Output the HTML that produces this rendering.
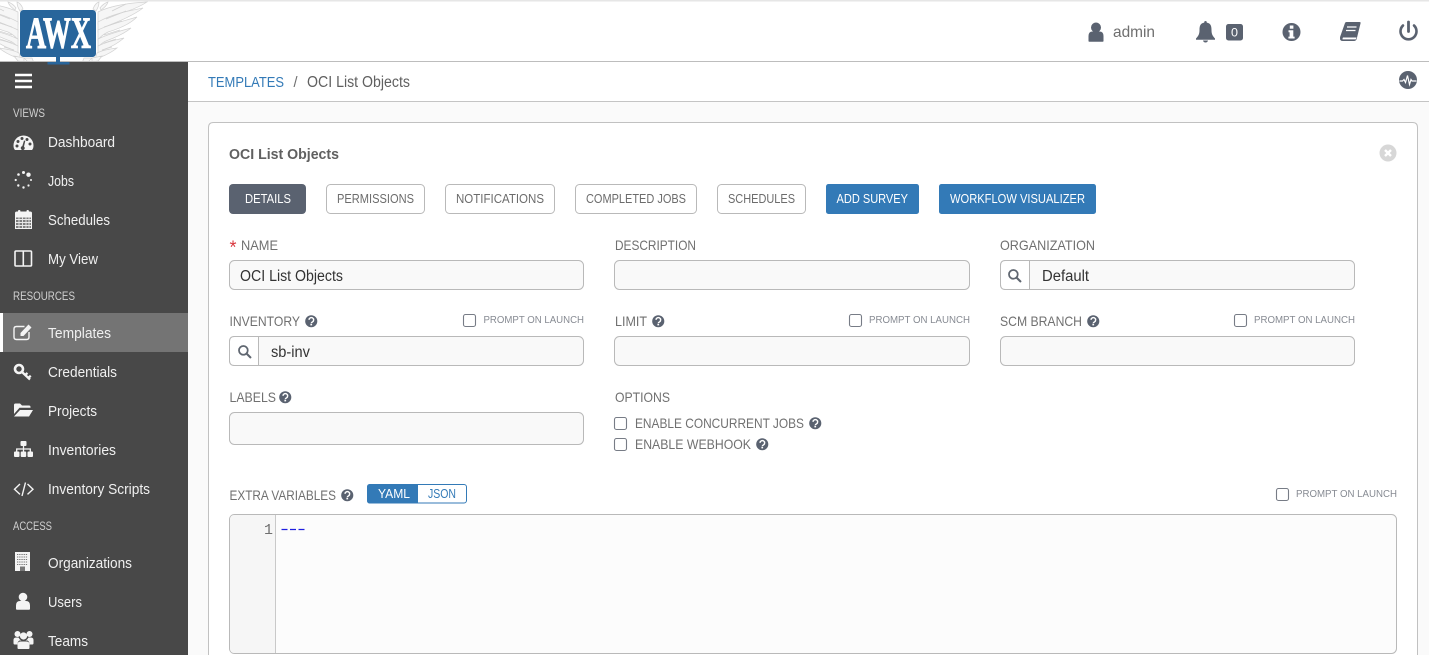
<!DOCTYPE html>
<html lang="en"><head><meta charset="utf-8"><title>OCI List Objects</title>
<style>
html,body{margin:0;padding:0;background:#fff;width:1429px;height:655px;overflow:hidden}
svg{display:block;font-family:"Liberation Sans",sans-serif}
.m{font-size:15px;fill:#f0f0f0}
.h{font-size:11.5px;fill:#d0d0d0}
.l{font-size:14px;fill:#707070}
.b{font-size:13px;fill:#6c6c6c}
.w{font-size:13px;fill:#fff}
.p{font-size:10.5px;fill:#878b93}
.v{font-size:15.5px;fill:#333}
.i{fill:#f9f9f9;stroke:#b9b9b9}
.o{fill:#fff;stroke:#b9b9b9}
.c{fill:#fff;stroke:#777c86;stroke-width:1.1}
</style></head><body>
<svg width="1429" height="655" viewBox="0 0 1429 655" xmlns="http://www.w3.org/2000/svg">
<defs>
<symbol id="q" viewBox="-6.5 -6.5 13 13" overflow="visible"><circle r="6.3" fill="#5a6270"/><path d="M-2.3-1.5a2.4 2.4 0 1 1 3.7 2.1c-.9.5-1.3.9-1.3 1.3" fill="none" stroke="#fff" stroke-width="1.5"/><rect x="-.9" y="2.6" width="1.8" height="1.7" fill="#fff"/></symbol>
<symbol id="s" viewBox="0 0 16 16"><circle cx="6.7" cy="6.7" r="5" fill="none" stroke="#5f6670" stroke-width="2"/><path d="M10.4 10.4l4.3 4.3" stroke="#5f6670" stroke-width="2.4" stroke-linecap="round"/></symbol>
<g id="feathers" fill="#f6f6f6" stroke="#d2d2d2" stroke-width=".7">
<path d="M98 12C110 6 128 3 147 2 138 8 126 12 116 15 110 17 103 20 98 24Z"/>
<path d="M98 22C112 14 128 11 143 8 134 15 122 20 112 24 107 26 102 29 98 32Z"/>
<path d="M98 30C110 24 124 21 137 17 130 24 118 29 108 32 104 34 100 37 98 40Z"/>
<path d="M98 39C108 34 120 31 131 28 124 34 114 38 106 41 103 42 100 45 98 47Z"/>
<path d="M98 46C106 42 115 40 124 38 118 43 111 47 105 49 102 51 100 52 98 54Z"/>
<path d="M97 53C103 50 110 49 117 48 112 52 106 55 101 57L95 60Z"/>
<path d="M92 58l10-2-4 5-6 1zM84 58l8 0-4 4-6 1z"/>
<path d="M93 9C94 6 96 3 99 2 99 5 98 8 96 11ZM100 8C102 5 105 3 108 2 107 5 104 8 101 10Z"/>
<path d="M112 11l14-7M106 19l20-8M104 27l18-6M104 35l16-5M104 43l12-4M102 50l10-3" fill="none"/>
</g>
</defs>

<rect width="1429" height="655" fill="#fff"/>
<rect width="1429" height="1.5" fill="#e6e6e6"/>
<rect x="188" y="62" width="1241" height="593" fill="#fafafa"/>
<rect x="188" y="62" width="1241" height="39" fill="#fff"/>
<use href="#feathers"/>
<use href="#feathers" transform="translate(116 0) scale(-1 1)"/>
<rect x="0" y="61" width="1429" height="1" fill="#bdbdbd"/>
<rect x="188" y="101" width="1241" height="1" fill="#c4c4c4"/>
<rect x="0" y="62" width="188" height="593" fill="#484848"/>

<!-- logo -->
<rect x="20" y="10" width="76" height="47" rx="3.5" fill="#28659b"/>
<rect x="56" y="56" width="4" height="6" fill="#28659b"/>
<rect x="47.500" y="62" width="22" height="2.500" fill="#28659b"/>
<text x="26" y="47.500" font-family="Liberation Serif,serif" font-weight="700" font-size="44" fill="#fff" stroke="#fff" stroke-width="1" textLength="65" lengthAdjust="spacingAndGlyphs">AWX</text>

<!-- sidebar -->
<rect x="0" y="313" width="188" height="39" fill="#747474"/>
<rect x="0" y="313" width="3" height="39" fill="#fff"/>
<path d="M15 75h17M15 81h17M15 87h17" stroke="#fff" stroke-width="2.500"/>
<text class="h" x="13" y="117" textLength="32" lengthAdjust="spacingAndGlyphs">VIEWS</text>
<text class="h" x="13" y="300" textLength="62" lengthAdjust="spacingAndGlyphs">RESOURCES</text>
<text class="h" x="13" y="530" textLength="39" lengthAdjust="spacingAndGlyphs">ACCESS</text>
<text class="m" x="48" y="147" textLength="67" lengthAdjust="spacingAndGlyphs">Dashboard</text>
<text class="m" x="48" y="186" textLength="26" lengthAdjust="spacingAndGlyphs">Jobs</text>
<text class="m" x="48" y="225" textLength="62" lengthAdjust="spacingAndGlyphs">Schedules</text>
<text class="m" x="48" y="264" textLength="50" lengthAdjust="spacingAndGlyphs">My View</text>
<text class="m" x="48" y="338" textLength="63" lengthAdjust="spacingAndGlyphs">Templates</text>
<text class="m" x="48" y="377" textLength="69" lengthAdjust="spacingAndGlyphs">Credentials</text>
<text class="m" x="48" y="416" textLength="49" lengthAdjust="spacingAndGlyphs">Projects</text>
<text class="m" x="48" y="455" textLength="68" lengthAdjust="spacingAndGlyphs">Inventories</text>
<text class="m" x="48" y="494" textLength="102" lengthAdjust="spacingAndGlyphs">Inventory Scripts</text>
<text class="m" x="48" y="568" textLength="84" lengthAdjust="spacingAndGlyphs">Organizations</text>
<text class="m" x="48" y="607" textLength="34" lengthAdjust="spacingAndGlyphs">Users</text>
<text class="m" x="48" y="646" textLength="40" lengthAdjust="spacingAndGlyphs">Teams</text>

<!-- dashboard -->
<path d="M13.500 145.500a10 10 0 0 1 20 0c0 2-.5 3.500-1.500 4.500H15c-1-1-1.500-2.500-1.500-4.500Z" fill="#f4f4f4"/>
<g fill="#484848"><circle cx="18" cy="141.500" r="1.500"/><circle cx="22" cy="138.500" r="1.500"/><circle cx="27" cy="139.500" r="1.500"/><circle cx="30" cy="144" r="1.500"/><circle cx="17" cy="146" r="1.500"/><path d="M24 140.500l1.300.4-1.300 5.600a2 2 0 1 1-1.700-.4Z"/></g>
<!-- jobs -->
<g fill="#f4f4f4"><circle cx="28.500" cy="174.700" r="2.200"/><circle cx="23.500" cy="172.500" r="1.500"/><circle cx="18.500" cy="174.500" r="1.300"/><circle cx="15.700" cy="180" r="1.100"/><circle cx="18.300" cy="185.500" r="1.200"/><circle cx="23.500" cy="187.500" r="1.200"/><circle cx="28.500" cy="185.500" r="1.100"/><circle cx="31" cy="180" r="1"/></g>
<!-- schedules -->
<path d="M15 213q0-1.500 2-1.500h13q2 0 2 1.500v16H15Z" fill="#f4f4f4"/><rect x="18" y="210" width="2.400" height="4" rx="1" fill="#f4f4f4"/><rect x="26.500" y="210" width="2.400" height="4" rx="1" fill="#f4f4f4"/>
<path d="M16 217.500h15v10.500H16Z" fill="#7d7d7d"/><path d="M16 219.500h15M16 222.500h15M16 225.500h15M19 217v11M22.500 217v11M26 217v11M29 217v11" stroke="#e8e8e8" stroke-width=".9"/>
<!-- my view -->
<rect x="15" y="251" width="16.500" height="15" rx="1" fill="none" stroke="#f4f4f4" stroke-width="1.600"/><path d="M23.300 251v15" stroke="#f4f4f4" stroke-width="1.600"/>
<!-- templates -->
<path d="M29 332v5q0 2.500-2.500 2.500h-10q-2.500 0-2.500-2.500v-8q0-2.500 2.500-2.500h8" fill="none" stroke="#f4f4f4" stroke-width="1.400"/>
<path d="M20.500 336v-3l8-8.500 3 3-8 8.500Z" fill="#f4f4f4"/>
<!-- credentials -->
<circle cx="19" cy="369" r="4" fill="none" stroke="#f4f4f4" stroke-width="2.600"/><path d="M22 372l8 7.500M28 378l2.800-2.200M25 375l2.500-2" stroke="#f4f4f4" stroke-width="2.300" fill="none"/>
<!-- projects -->
<path d="M14 405q0-1.500 1.500-1.500h4.500l2 2h7q1.500 0 1.500 1.500v.8H19.500L14 414Z" fill="#f4f4f4"/><path d="M20 410h13l-4 6.500H14Z" fill="#f4f4f4"/>
<!-- inventories -->
<g fill="#f4f4f4"><rect x="20.500" y="441" width="6" height="5" rx="1"/><rect x="14" y="451.500" width="5.500" height="5.500" rx="1"/><rect x="20.700" y="451.500" width="5.500" height="5.500" rx="1"/><rect x="27.500" y="451.500" width="5.500" height="5.500" rx="1"/></g>
<path d="M23.500 446v5.500M16.700 451.500v-2.500h13.600v2.500" fill="none" stroke="#f4f4f4" stroke-width="1.300"/>
<!-- code -->
<path d="M20 484l-5.500 5.200 5.500 5.200M27.500 484l5.500 5.200-5.500 5.200M25.500 482.500l-3.500 13.500" fill="none" stroke="#f4f4f4" stroke-width="1.400"/>
<!-- organizations -->
<rect x="15" y="552" width="15" height="19" fill="#f4f4f4"/>
<path d="M17 554.500h11M17 557h11M17 559.500h11M17 562h11M17 564.500h11" stroke="#777" stroke-width="1.100" stroke-dasharray="1.300 .9"/><rect x="20" y="566.500" width="5" height="4.500" fill="#777"/>
<!-- users -->
<circle cx="23" cy="597" r="4.300" fill="#f4f4f4"/><path d="M16 609v-3.500q0-4.500 4-4.500h6q4 0 4 4.500v3.500q0 .7-1 .7H17q-1 0-1-.7Z" fill="#f4f4f4"/>
<!-- teams -->
<g fill="#f4f4f4"><circle cx="17.500" cy="634" r="3"/><circle cx="29.500" cy="634" r="3"/><circle cx="23.500" cy="636" r="3.600"/><path d="M13.500 643v-3q0-2.500 3-2.500h2q1 2 3 3h-2q-2 1-2 4h-3q-1 0-1-1.500ZM33.500 643v-3q0-2.500-3-2.500h-2q-1 2-3 3h2q2 1 2 4h3q1 0 1-1.500Z"/><path d="M17.500 648v-3.500q0-3 3-3h6q3 0 3 3v3.500q0 1-1.500 1h-9q-1.500 0-1.500-1Z"/></g>

<!-- header -->
<text x="1113" y="37" font-size="16" fill="#6f6f6f" textLength="42" lengthAdjust="spacingAndGlyphs">admin</text>
<circle cx="1096" cy="27.500" r="5" fill="#5a6270"/><path d="M1088.500 41v-5q0-4.500 4-4.500h7q4 0 4 4.500v5q0 .8-1 .8h-13q-1 0-1-.8Z" fill="#5a6270"/>
<path d="M1205.500 21q1.300 0 1.300 1.600c4 .7 4.700 3.500 4.700 7.400 0 4.500 1.300 6 3.500 8.500v1.200h-19v-1.200c2.200-2.500 3.500-4 3.500-8.500 0-3.900.7-6.700 4.700-7.400q0-1.600 1.300-1.600ZM1203 40.500h5q-.5 2-2.500 2t-2.500-2Z" fill="#5a6270"/>
<rect x="1226" y="24" width="17" height="16.500" rx="2.500" fill="#5a6270"/>
<text x="1231" y="36.500" font-size="11.500" fill="#fff" textLength="7" lengthAdjust="spacingAndGlyphs">0</text>
<circle cx="1291.500" cy="32" r="9" fill="#5a6270"/><rect x="1289.800" y="25.500" width="3.600" height="3.200" fill="#fff"/><path d="M1288.500 30.300h4.800v6.300h1.300v1.900h-6.200v-1.900h1.200v-4.300h-1.100Z" fill="#fff"/>
<path d="M1345 23q.3-1 1.500-1h13q1.500 0 1 1.500l-3.700 15q-.5 2.500-3 2.500h-11q-3 0-2.800-3 0-1 .3-1.700Z" fill="#5a6270"/>
<path d="M1343 37.500h13.500l-.7 1.900H1342.500q0-1.300.5-1.900Z" fill="#fff"/><path d="M1347 27h9.500M1346 30.500h9.500" stroke="#fff" stroke-width="1.300"/>
<path d="M1403 25.500a8 8 0 1 0 11 0" fill="none" stroke="#5a6270" stroke-width="2.600" stroke-linecap="round"/><path d="M1408.500 22v9.500" stroke="#5a6270" stroke-width="2.800" stroke-linecap="round"/>

<!-- breadcrumb -->
<text x="208" y="87" font-size="14.500" fill="#337ab7" textLength="76" lengthAdjust="spacingAndGlyphs">TEMPLATES</text>
<text x="293.500" y="87" font-size="14.500" fill="#6f6f6f">/</text>
<text x="307" y="87" font-size="15.500" fill="#606060" textLength="103" lengthAdjust="spacingAndGlyphs">OCI List Objects</text>
<circle cx="1408" cy="80" r="9" fill="#5a6270"/><path d="M1399.500 81h3l1.500-1.500 1.500 3 2-7 2 9 1.500-5 1 1.500h4.500" fill="none" stroke="#fff" stroke-width="1.200"/>

<!-- panel -->
<path d="M208.500 655V127.500q0-5 5-5h1199q5 0 5 5V655" fill="#fff" stroke="#c1c1c1"/>
<text x="229" y="159" font-size="14.500" font-weight="700" fill="#606060" textLength="110" lengthAdjust="spacingAndGlyphs">OCI List Objects</text>
<circle cx="1388" cy="153" r="8.500" fill="#d7d7d7"/><path d="M1385 150l6 6M1391 150l-6 6" stroke="#fff" stroke-width="2.400"/>

<!-- buttons -->
<rect x="229" y="184" width="77" height="30" rx="4" fill="#5a6270"/>
<text class="w" x="245" y="203" textLength="46" lengthAdjust="spacingAndGlyphs">DETAILS</text>
<rect class="o" x="326.500" y="184.500" width="98" height="29" rx="4"/><text class="b" x="337" y="203" textLength="77" lengthAdjust="spacingAndGlyphs">PERMISSIONS</text>
<rect class="o" x="445.500" y="184.500" width="109" height="29" rx="4"/><text class="b" x="456" y="203" textLength="88" lengthAdjust="spacingAndGlyphs">NOTIFICATIONS</text>
<rect class="o" x="575.500" y="184.500" width="121" height="29" rx="4"/><text class="b" x="586" y="203" textLength="100" lengthAdjust="spacingAndGlyphs">COMPLETED JOBS</text>
<rect class="o" x="717.500" y="184.500" width="88" height="29" rx="4"/><text class="b" x="728" y="203" textLength="67" lengthAdjust="spacingAndGlyphs">SCHEDULES</text>
<rect x="826" y="184" width="93" height="30" rx="2.500" fill="#337ab7"/><text class="w" x="836.500" y="203" textLength="71.500" lengthAdjust="spacingAndGlyphs">ADD SURVEY</text>
<rect x="939" y="184" width="157" height="30" rx="2.500" fill="#337ab7"/><text class="w" x="950" y="203" textLength="135" lengthAdjust="spacingAndGlyphs">WORKFLOW VISUALIZER</text>

<!-- row 1 -->
<text x="229.500" y="253.500" font-size="18" fill="#d9363e">*</text>
<text class="l" x="241" y="250" textLength="37" lengthAdjust="spacingAndGlyphs">NAME</text>
<text class="l" x="615" y="250" textLength="81" lengthAdjust="spacingAndGlyphs">DESCRIPTION</text>
<text class="l" x="1000" y="250" textLength="95" lengthAdjust="spacingAndGlyphs">ORGANIZATION</text>
<rect class="i" x="229.500" y="260.500" width="354" height="29" rx="5"/>
<text class="v" x="240" y="281" textLength="103" lengthAdjust="spacingAndGlyphs">OCI List Objects</text>
<rect class="i" x="614.500" y="260.500" width="355" height="29" rx="5"/>
<rect class="i" x="1000.500" y="260.500" width="354" height="29" rx="5"/>
<path d="M1005.500 260.500h24v29h-24q-5 0-5-5v-19q0-5 5-5Z" fill="#fff" stroke="#b9b9b9"/>
<use href="#s" x="1007.500" y="268.500" width="14" height="14"/>
<text class="v" x="1042" y="281" textLength="47" lengthAdjust="spacingAndGlyphs">Default</text>

<!-- row 2 -->
<text class="l" x="229.500" y="326" textLength="70.500" lengthAdjust="spacingAndGlyphs">INVENTORY</text><use href="#q" x="305" y="315" width="12.500" height="12.500"/>
<rect class="c" x="463.500" y="314.500" width="12" height="12" rx="2"/><text class="p" x="483.500" y="323" textLength="100.500" lengthAdjust="spacingAndGlyphs">PROMPT ON LAUNCH</text>
<rect class="i" x="229.500" y="336.500" width="354" height="29" rx="5"/>
<path d="M234.500 336.500h24v29h-24q-5 0-5-5v-19q0-5 5-5Z" fill="#fff" stroke="#b9b9b9"/>
<use href="#s" x="237.500" y="344.500" width="14" height="14"/>
<text class="v" x="271" y="357" textLength="39" lengthAdjust="spacingAndGlyphs">sb-inv</text>

<text class="l" x="615" y="326" textLength="32" lengthAdjust="spacingAndGlyphs">LIMIT</text><use href="#q" x="652" y="315" width="12.500" height="12.500"/>
<rect class="c" x="849.500" y="314.500" width="12" height="12" rx="2"/><text class="p" x="869" y="323" textLength="101" lengthAdjust="spacingAndGlyphs">PROMPT ON LAUNCH</text>
<rect class="i" x="614.500" y="336.500" width="355" height="29" rx="5"/>

<text class="l" x="1000" y="326" textLength="82" lengthAdjust="spacingAndGlyphs">SCM BRANCH</text><use href="#q" x="1087" y="315" width="12.500" height="12.500"/>
<rect class="c" x="1234.500" y="314.500" width="12" height="12" rx="2"/><text class="p" x="1254" y="323" textLength="101" lengthAdjust="spacingAndGlyphs">PROMPT ON LAUNCH</text>
<rect class="i" x="1000.500" y="336.500" width="354" height="29" rx="5"/>

<!-- row 3 -->
<text class="l" x="229.500" y="402" textLength="46.500" lengthAdjust="spacingAndGlyphs">LABELS</text><use href="#q" x="279" y="391" width="12.500" height="12.500"/>
<rect class="i" x="229.500" y="412.500" width="354" height="32" rx="5"/>
<text class="l" x="615" y="402" textLength="55" lengthAdjust="spacingAndGlyphs">OPTIONS</text>
<rect class="c" x="614.500" y="417.500" width="12" height="12" rx="2"/>
<text class="l" x="635" y="428" textLength="169" lengthAdjust="spacingAndGlyphs">ENABLE CONCURRENT JOBS</text><use href="#q" x="809" y="417" width="12.500" height="12.500"/>
<rect class="c" x="614.500" y="438.500" width="12" height="12" rx="2"/>
<text class="l" x="635" y="449" textLength="116" lengthAdjust="spacingAndGlyphs">ENABLE WEBHOOK</text><use href="#q" x="756" y="438" width="12.500" height="12.500"/>

<!-- extra vars -->
<text class="l" x="229.500" y="500" textLength="106.500" lengthAdjust="spacingAndGlyphs">EXTRA VARIABLES</text><use href="#q" x="341" y="489" width="12.500" height="12.500"/>
<rect x="367.500" y="484.500" width="99" height="18.500" rx="2.500" fill="#fff" stroke="#337ab7"/>
<path d="M370 484h48v19.500h-48q-3 0-3-3V487q0-3 3-3Z" fill="#337ab7"/>
<text x="378" y="498" font-size="13" fill="#fff" textLength="32" lengthAdjust="spacingAndGlyphs">YAML</text>
<text x="428" y="498" font-size="13" fill="#337ab7" textLength="28" lengthAdjust="spacingAndGlyphs">JSON</text>
<rect class="c" x="1276.500" y="488.500" width="12" height="12" rx="2"/><text class="p" x="1296" y="497" textLength="101" lengthAdjust="spacingAndGlyphs">PROMPT ON LAUNCH</text>
<rect x="229.500" y="514.500" width="1167" height="139" rx="5" fill="#fcfcfc" stroke="#b9b9b9"/>
<path d="M234.500 515h40.500v138h-40.500q-4.500 0-4.500-4.500v-129q0-4.500 4.500-4.500Z" fill="#f6f6f6"/>
<path d="M275.500 515v138" stroke="#c9c9c9"/>
<text x="264" y="534" font-family="Liberation Mono,monospace" font-size="15" fill="#6f6f6f">1</text>
<path d="M281.500 529.500h6M290 529.500h6M298.500 529.500h6" stroke="#1f1fe0" stroke-width="1.200"/>
</svg>
</body></html>
